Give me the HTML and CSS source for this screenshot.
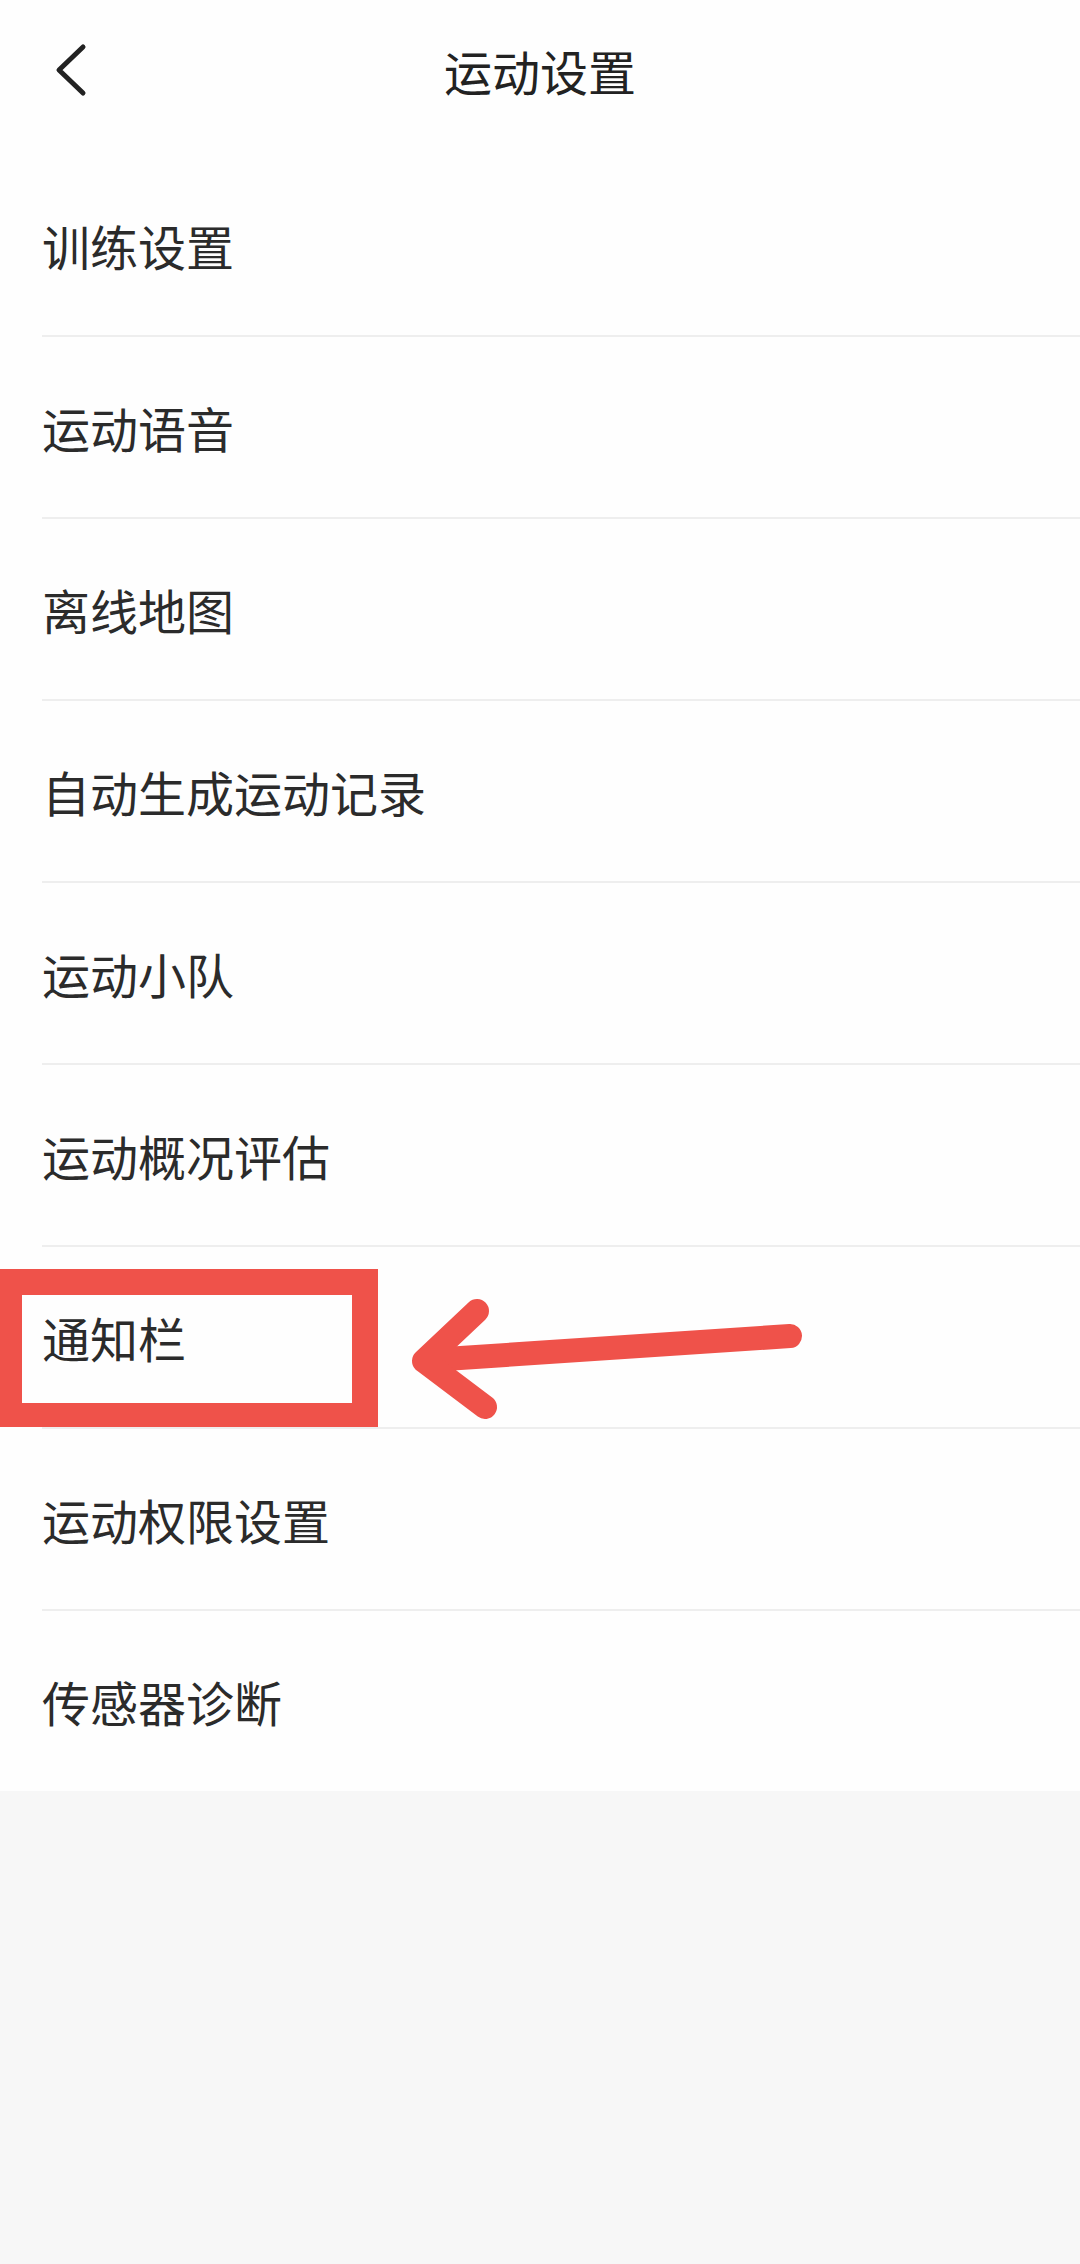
FILE: index.html
```html
<!DOCTYPE html>
<html>

<head>
    <meta charset="UTF-8" />
    <title>运动设置</title>
    <link rel="stylesheet" href="styles.css">
</head>

<body>
    <div class="page">
        <div class="header">
            <span class="back">
                <svg width="40" height="60" viewBox="0 0 40 60">
                    <polyline points="31,6 7,29 31,52" fill="none" stroke="#222" stroke-width="5" stroke-linecap="round" stroke-linejoin="round" />
                </svg>
            </span>
            <h1 class="title">运动设置</h1>
        </div>
        <ul class="menu">
            <li class="menu-item">训练设置</li>
            <li class="menu-item">运动语音</li>
            <li class="menu-item">离线地图</li>
            <li class="menu-item">自动生成运动记录</li>
            <li class="menu-item">运动小队</li>
            <li class="menu-item">运动概况评估</li>
            <li class="menu-item">通知栏</li>
            <li class="menu-item">运动权限设置</li>
            <li class="menu-item last">传感器诊断</li>
        </ul>
    </div>

    <!-- annotation drawn over the screenshot -->
    <div class="mark-box"></div>
    <svg class="mark-arrow" width="1080" height="2264" viewBox="0 0 1080 2264">
        <g fill="none" stroke="#ef524a" stroke-width="24" stroke-linecap="round" stroke-linejoin="round">
            <line x1="430" y1="1360" x2="790" y2="1336" />
            <polyline points="477,1311 424,1361 485,1407" />
        </g>
    </svg>
</body>

</html>
```

FILE: styles.css
```css
body {
    font-family: "Noto Sans CJK SC", "Noto Sans", sans-serif;
    margin: 0;
    padding: 0;
    background-color: #f7f7f7;
    color: #2b2b2b;
}

.page {
    background-color: #fefefe;
}

.header {
    height: 140px;
    display: flex;
    align-items: center;
    justify-content: center;
    position: relative;
}

.back {
    position: absolute;
    left: 52px;
    top: 41px;
    width: 40px;
    height: 60px;
}

.title {
    margin: 0;
    font-size: 48px;
    font-weight: normal;
    color: #222;
}

.menu {
    list-style: none;
    margin: 15px 0 0 0;
    padding: 0;
}

.menu-item {
    height: 180px;
    margin-left: 42px;
    display: flex;
    align-items: center;
    font-size: 48px;
    border-bottom: 2px solid #eeeeee;
}

.menu-item.last {
    height: 180px;
    border-bottom: none;
}

.mark-box {
    position: absolute;
    left: 0;
    top: 1269px;
    width: 330px;
    height: 108px;
    border: 24px solid #ef524a;
    border-left-width: 22px;
    border-right-width: 26px;
    border-top-width: 26px;
}

.mark-arrow {
    position: absolute;
    left: 0;
    top: 0;
    pointer-events: none;
}
```
